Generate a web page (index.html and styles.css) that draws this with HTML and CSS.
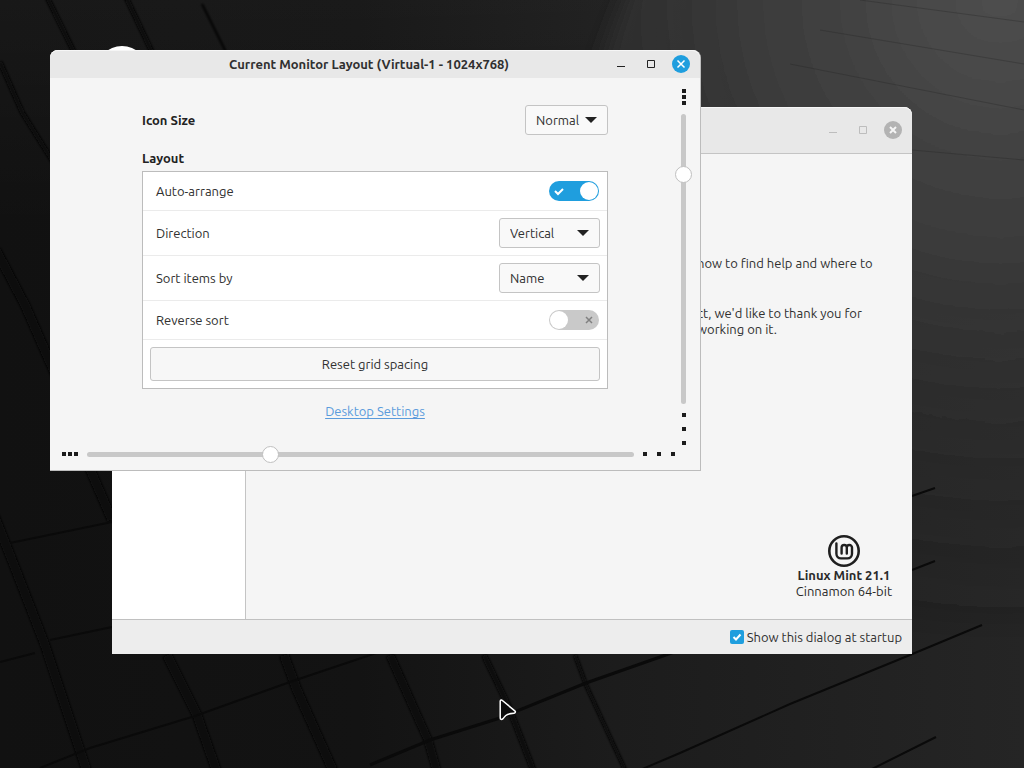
FILE: index.html
```html
<!DOCTYPE html>
<html lang="en">
<head>
    <meta charset="UTF-8">
    <meta name="viewport" content="width=device-width, initial-scale=1.0">
    <title>Current Monitor Layout</title>
    <link rel="stylesheet" href="styles.css">
</head>
<body>
    <svg class="wallpaper" viewBox="0 0 1024 768" preserveAspectRatio="xMidYMid slice" aria-hidden="true">
        <defs>
            <linearGradient id="base" x1="0" y1="0" x2="1" y2="0">
                <stop offset="0" stop-color="#111111"/>
                <stop offset="0.35" stop-color="#131313"/>
                <stop offset="0.6" stop-color="#1c1c1c"/>
                <stop offset="1" stop-color="#252525"/>
            </linearGradient>
            <linearGradient id="top" x1="0" y1="0" x2="0" y2="1">
                <stop offset="0" stop-color="#fff" stop-opacity="0.03"/>
                <stop offset="0.3" stop-color="#fff" stop-opacity="0"/>
            </linearGradient>
            <radialGradient id="glow" gradientUnits="userSpaceOnUse" cx="1000" cy="0" r="640">
                <stop offset="0" stop-color="#4e4e4e"/>
                <stop offset="0.4" stop-color="#3a3a3a"/>
                <stop offset="1" stop-color="#262626" stop-opacity="0"/>
            </radialGradient>
            <filter id="soft"><feGaussianBlur stdDeviation="10"/></filter>
            <filter id="edge"><feGaussianBlur stdDeviation="1"/></filter>
        </defs>
        <rect width="1024" height="768" fill="url(#base)"/>
        <rect width="1024" height="768" fill="url(#top)"/>
        <path d="M640-40 600 60 700 640H1070V-40Z" fill="url(#glow)" filter="url(#soft)"/>
        <!-- deep grooves -->
        <g fill="none" stroke="#070707" stroke-linejoin="round" filter="url(#edge)">
            <path stroke-width="5" d="M46-5 74 52M125-5 152 52M0 62 22 112 55 165"/>
            <path stroke-width="2" d="M202 4 226 52"/>
            <path stroke-width="10" d="M-4 250 25 305 60 385M84 455 112 520M-6 515 12 560 45 645 88 775"/>
            <path stroke-width="10" d="M167 655 197 715 218 775M284 655 297 690 335 775"/>
            <path stroke-width="9" d="M390 655 428 740 438 775"/>
            <path stroke-width="6" d="M484 655 508 705 534 772"/>
            <path stroke-width="4" d="M575 655 586 685 626 772"/>
        </g>
        <!-- cross joints -->
        <g fill="none" stroke="#0a0a0a" stroke-width="3">
            <path stroke-width="2" d="M10 543 112 522M0 662 35 653M50 640 112 627"/>
            <path stroke-width="2" d="M40 768 90 748 195 716 290 682 400 645"/>
            <path d="M370 765 430 740 500 718 586 683 680 650"/>
            <path stroke-width="2" d="M640 770 680 753 790 704 910 655 982 625M870 770 936 737"/>
            <path stroke-width="2" d="M912 496 935 488M912 570 935 561"/>
        </g>
        <!-- light edges at the top right -->
        <g fill="none" stroke="#222" stroke-opacity="0.3">
            <path d="M860 0 1024 22M820 30 1024 64M790 64 1024 110M912 150 1024 160"/>
        </g>
    </svg>

    <div class="desktop-icon"></div>

    <section class="window welcome">
        <header class="titlebar">
            <button class="win-btn" aria-label="Minimize">
                <svg width="18" height="18" viewBox="0 0 18 18"><path d="M5 11.5h8" stroke="currentColor"/></svg>
            </button>
            <button class="win-btn" aria-label="Maximize">
                <svg width="18" height="18" viewBox="0 0 18 18"><path d="M5.5 5.5h7v7h-7z" fill="none" stroke="currentColor"/></svg>
            </button>
            <button class="win-btn close" aria-label="Close">
                <svg width="18" height="18" viewBox="0 0 18 18"><path d="M6 6l6 6M12 6l-6 6" stroke="currentColor" stroke-width="2"/></svg>
            </button>
        </header>
        <div class="welcome-main">
            <nav class="sidebar"></nav>
            <div class="welcome-page">
                <div class="intro">
                    <p>how to find help and where to</p>
                    <p>ct, we'd like to thank you for<br>working on it.</p>
                </div>
                <div class="release">
                    <svg class="logo" width="32" height="32" viewBox="0 0 32 32" fill="none" stroke="#1f1f1f">
                        <circle cx="16" cy="16" r="14.7" stroke-width="2.6"/>
                        <path d="M8.400 8.400V18.800a4.600 4.600 0 0 0 4.600 4.600h6.400a4.600 4.600 0 0 0 4.600-4.600v-6.200a2.600 2.600 0 0 0-5.200 0V18.600M18.800 12.800v-.2a2.600 2.600 0 0 0-5.200 0V18.600" stroke-width="2.400" stroke-linecap="round"/>
                    </svg>
                    <b>Linux Mint 21.1</b>
                    <span>Cinnamon 64-bit</span>
                </div>
            </div>
        </div>
        <footer class="welcome-footer">
            <input type="checkbox" id="startup" class="check" checked>
            <label for="startup">Show this dialog at startup</label>
        </footer>
    </section>

    <section class="window monitor">
        <header class="titlebar">
            <h1>Current Monitor Layout (Virtual-1 - 1024x768)</h1>
            <button class="win-btn" aria-label="Minimize">
                <svg width="18" height="18" viewBox="0 0 18 18"><path d="M5 11.5h8" stroke="currentColor"/></svg>
            </button>
            <button class="win-btn" aria-label="Maximize">
                <svg width="18" height="18" viewBox="0 0 18 18"><path d="M5.5 5.5h7v7h-7z" fill="none" stroke="currentColor"/></svg>
            </button>
            <button class="win-btn close" aria-label="Close">
                <svg width="18" height="18" viewBox="0 0 18 18"><path d="M5.5 5.5l7 7M12.5 5.5l-7 7" stroke="currentColor" stroke-width="1.5"/></svg>
            </button>
        </header>
        <div class="monitor-body">
            <div class="settings">
                <div class="size-row">
                    <label for="iconSize">Icon Size</label>
                    <select id="iconSize">
                        <option>Small</option>
                        <option selected>Normal</option>
                        <option>Large</option>
                    </select>
                </div>
                <h2>Layout</h2>
                <div class="card">
                    <div class="row">
                        <label for="autoArrange">Auto-arrange</label>
                        <input type="checkbox" id="autoArrange" class="switch" checked>
                    </div>
                    <div class="row tall">
                        <label for="direction">Direction</label>
                        <select id="direction">
                            <option>Vertical</option>
                            <option>Horizontal</option>
                        </select>
                    </div>
                    <div class="row tall">
                        <label for="sortBy">Sort items by</label>
                        <select id="sortBy">
                            <option>Name</option>
                            <option>Size</option>
                            <option>Type</option>
                        </select>
                    </div>
                    <div class="row">
                        <label for="reverse">Reverse sort</label>
                        <input type="checkbox" id="reverse" class="switch">
                    </div>
                    <div class="row reset">
                        <button class="reset-btn">Reset grid spacing</button>
                    </div>
                </div>
                <a href="#" class="link">Desktop Settings</a>
            </div>
            <div class="rail vertical">
                <div class="dots"><i></i><i></i><i></i></div>
                <input type="range" min="0" max="100" value="19" aria-label="Vertical spacing">
                <div class="dots wide"><i></i><i></i><i></i></div>
            </div>
            <div class="rail horizontal">
                <div class="dots"><i></i><i></i><i></i></div>
                <input type="range" min="0" max="100" value="33" aria-label="Horizontal spacing">
                <div class="dots wide"><i></i><i></i><i></i></div>
            </div>
        </div>
    </section>

    <svg class="cursor" width="18" height="22" viewBox="0 0 18 22" aria-hidden="true">
        <path d="M1.2 2.2C1.2 1 2.6.6 3.4 1.5l12.4 10.3c1.2 1 .5 2.3-.8 2.4-3.6.2-6.3.8-8.2 2.3-1 .8-2 2.3-3.1 3.4-.9.9-2.5.7-2.5-.9Z" fill="#0a0a0a" stroke="#fff" stroke-width="1.5"/>
    </svg>
</body>
</html>
```

FILE: styles.css
```css
* {
    box-sizing: border-box;
}
body {
    margin: 0;
    height: 100vh;
    position: relative;
    overflow: hidden;
    background: #141414;
    color: #303030;
    font-family: Ubuntu, "Noto Sans", sans-serif;
    font-size: 13px;
    line-height: 16px;
}
button, select, input {
    font: inherit;
    color: inherit;
    margin: 0;
}
.wallpaper {
    position: absolute;
    inset: 0;
    width: 100%;
    height: 100%;
}
.desktop-icon {
    position: absolute;
    left: 96px;
    top: 46px;
    width: 52px;
    height: 52px;
    border-radius: 50%;
    background: #fff;
}

/* windows */
.window {
    position: absolute;
    display: flex;
    flex-direction: column;
    background: #f5f5f5;
    border-radius: 8px 8px 0 0;
}
.titlebar {
    display: flex;
    align-items: center;
    justify-content: flex-end;
    gap: 12px;
    padding: 0 10px;
    background: #e8e8e8;
    border-radius: 8px 8px 0 0;
    box-shadow: inset 0 1px #f6f6f6;
}
.win-btn {
    display: flex;
    width: 18px;
    height: 18px;
    padding: 0;
    border: none;
    border-radius: 50%;
    background: none;
}
.win-btn.close {
    background: #1f9ede;
    color: #fff;
}

/* welcome window */
.welcome {
    inset: 107px 112px 114px;
}
.welcome .titlebar {
    height: 47px;
    border-bottom: 1px solid #c4c4c4;
    color: #bdbdbd;
}
.welcome .close {
    background: #b3b3b3;
    color: #f5f5f5;
}
.welcome-main {
    flex: 1;
    display: flex;
}
.sidebar {
    width: 134px;
    background: #fff;
    border-right: 1px solid #c4c4c4;
}
.welcome-page {
    flex: 1;
    display: flex;
    flex-direction: column;
    justify-content: space-between;
    align-items: flex-end;
    padding: 101px 20px 20px;
}
.intro {
    width: 195px;
    white-space: nowrap;
}
.intro p {
    margin: 0 0 34px;
}
.release {
    display: flex;
    flex-direction: column;
    align-items: center;
    color: #2a2a2a;
}
.welcome-footer {
    display: flex;
    align-items: center;
    justify-content: flex-end;
    gap: 3px;
    height: 35px;
    padding-right: 10px;
    background: #ededed;
    border-top: 1px solid #c0c0c0;
}
.check {
    appearance: none;
    width: 14px;
    height: 14px;
    border-radius: 2px;
    border: 1px solid #b0b0b0;
}
.check:checked {
    border: none;
    background: #1f9ede url("data:image/svg+xml,%3Csvg xmlns='http://www.w3.org/2000/svg' viewBox='0 0 14 14'%3E%3Cpath d='M3.5 7l2.5 2.5 4.5-5' fill='none' stroke='white' stroke-width='2'/%3E%3C/svg%3E");
}

/* monitor layout window */
.monitor {
    top: 50px;
    left: 50px;
    right: 323px;
    border-right: 1px solid #bcbcbc;
    border-bottom: 1px solid #bcbcbc;
}
.monitor .titlebar {
    height: 28px;
    color: #222;
}
.titlebar h1 {
    flex: 1;
    margin: 0;
    padding-left: 78px;
    font-size: 13px;
    font-weight: 600;
    text-align: center;
    color: #303030;
}
.monitor-body {
    display: grid;
    grid-template-columns: 1fr 34px;
    padding-bottom: 7px;
}
.settings {
    display: flex;
    flex-direction: column;
    width: 100%;
    max-width: 500px;
    margin: 0 auto;
    padding: 27px 0 0 34px;
}
.size-row {
    display: flex;
    justify-content: space-between;
    align-items: center;
}
.size-row label, .settings h2 {
    font-size: 13px;
    font-weight: bold;
    color: #222;
}
.settings h2 {
    margin: 15px 0 5px;
}
select {
    appearance: none;
    height: 30px;
    width: 101px;
    padding: 0 10px;
    border: 1px solid #c4c4c4;
    border-radius: 3px;
    background: #f9f9f9 url("data:image/svg+xml,%3Csvg xmlns='http://www.w3.org/2000/svg' width='12' height='6' viewBox='0 0 12 6'%3E%3Cpath d='M0 0h12L6 6z' fill='%23222'/%3E%3C/svg%3E") no-repeat right 10px center;
}
#iconSize {
    width: 83px;
}
.card {
    background: #fff;
    border: 1px solid #bcbcbc;
}
.row {
    display: flex;
    align-items: center;
    justify-content: space-between;
    height: 39px;
    padding: 0 8px 0 13px;
    border-bottom: 1px solid #ebebeb;
}
.row.tall {
    height: 45px;
    padding-right: 7px;
}
.row.reset {
    height: auto;
    padding: 7px;
    border-bottom: none;
}
.reset-btn {
    flex: 1;
    height: 34px;
    border: 1px solid #c4c4c4;
    border-radius: 3px;
    background: #f7f7f7;
}
.switch {
    appearance: none;
    display: flex;
    width: 50px;
    height: 20px;
    padding: 1px;
    border-radius: 10px;
    background: #c9c9c9 url("data:image/svg+xml,%3Csvg xmlns='http://www.w3.org/2000/svg' width='10' height='10' viewBox='0 0 10 10'%3E%3Cpath d='M2 2l6 6M8 2l-6 6' stroke='%23808080' stroke-width='1.5'/%3E%3C/svg%3E") no-repeat right 5px center;
}
.switch::before {
    content: "";
    width: 18px;
    height: 18px;
    border-radius: 50%;
    background: #fff;
}
.switch:checked {
    justify-content: flex-end;
    background: #1f9ede url("data:image/svg+xml,%3Csvg xmlns='http://www.w3.org/2000/svg' width='10' height='10' viewBox='0 0 10 10'%3E%3Cpath d='M1 5l3 3 5-5' fill='none' stroke='white' stroke-width='2'/%3E%3C/svg%3E") no-repeat 5px center;
}
.link {
    margin-top: 14px;
    align-self: center;
    color: #5a9bdc;
    text-underline-offset: 2px;
}

/* spacing sliders */
.rail {
    display: flex;
    align-items: center;
    gap: 9px;
}
.rail.vertical {
    flex-direction: column;
    height: 367px;
    padding-top: 11px;
}
.rail.horizontal {
    grid-column: 1 / -1;
    height: 18px;
    padding: 0 25px 0 12px;
}
.dots {
    display: flex;
    gap: 2px;
}
.dots.wide {
    gap: 10px;
}
.vertical .dots {
    flex-direction: column;
    padding-left: 1px;
}
.dots i {
    width: 4px;
    height: 4px;
    background: #1c1c1c;
}
.rail input {
    appearance: none;
    flex: 1;
    min-width: 0;
    min-height: 0;
    background: none;
}
.horizontal input {
    height: 17px;
}
.vertical input {
    width: 17px;
    writing-mode: vertical-lr;
}
.rail input::-webkit-slider-runnable-track {
    block-size: 5px;
    border-radius: 3px;
    background: #c8c8c8;
}
.rail input::-webkit-slider-thumb {
    appearance: none;
    width: 17px;
    height: 17px;
    margin-block-start: -6px;
    border: 1px solid #c0c0c0;
    border-radius: 50%;
    background: #fff;
}

.cursor {
    position: absolute;
    left: 499px;
    top: 699px;
}
```
